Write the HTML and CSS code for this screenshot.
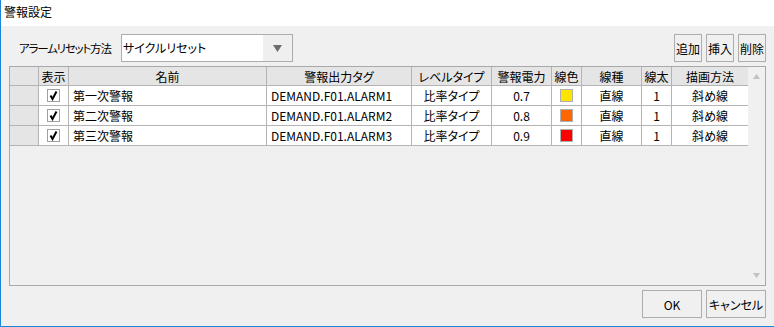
FILE: index.html
```html
<!DOCTYPE html>
<html lang="ja">
<head>
  <meta charset="UTF-8" />
  <title>警報設定</title>
  <link rel="stylesheet" href="styles.css">
</head>
<body>

  <div class="window">
    <div class="titlebar">警報設定</div>

    <div class="content">
      <div class="toolbar">
        <span class="label">アラームリセット方法</span>
        <div class="combo">
          <span class="combo-text">サイクルリセット</span>
          <span class="combo-btn">
            <svg width="9" height="7" viewBox="0 0 9 7"><path d="M0 0 H9 L4.5 7 Z" fill="#6d6d6d"/></svg>
          </span>
        </div>
        <div class="spacer"></div>
        <div class="tool-buttons">
          <button class="btn small">追加</button>
          <button class="btn small">挿入</button>
          <button class="btn small">削除</button>
        </div>
      </div>

      <div class="grid-box">
        <div class="grid">
          <div class="cell head"></div>
          <div class="cell head">表示</div>
          <div class="cell head">名前</div>
          <div class="cell head">警報出力タグ</div>
          <div class="cell head">レベルタイプ</div>
          <div class="cell head">警報電力</div>
          <div class="cell head">線色</div>
          <div class="cell head">線種</div>
          <div class="cell head">線太</div>
          <div class="cell head last">描画方法</div>

          <!-- 行 1 -->
          <div class="cell rowhead"></div>
          <div class="cell"><span class="check"><svg width="11" height="11" viewBox="0 0 11 11"><path d="M2.5 5.5 L4.5 9 L8.5 1.5" fill="none" stroke="#000" stroke-width="2"/></svg></span></div>
          <div class="cell left">第一次警報</div>
          <div class="cell left">DEMAND.F01.ALARM1</div>
          <div class="cell">比率タイプ</div>
          <div class="cell">0.7</div>
          <div class="cell"><span class="swatch yellow"></span></div>
          <div class="cell">直線</div>
          <div class="cell">1</div>
          <div class="cell last">斜め線</div>

          <!-- 行 2 -->
          <div class="cell rowhead"></div>
          <div class="cell"><span class="check"><svg width="11" height="11" viewBox="0 0 11 11"><path d="M2.5 5.5 L4.5 9 L8.5 1.5" fill="none" stroke="#000" stroke-width="2"/></svg></span></div>
          <div class="cell left">第二次警報</div>
          <div class="cell left">DEMAND.F01.ALARM2</div>
          <div class="cell">比率タイプ</div>
          <div class="cell">0.8</div>
          <div class="cell"><span class="swatch orange"></span></div>
          <div class="cell">直線</div>
          <div class="cell">1</div>
          <div class="cell last">斜め線</div>

          <!-- 行 3 -->
          <div class="cell rowhead"></div>
          <div class="cell"><span class="check"><svg width="11" height="11" viewBox="0 0 11 11"><path d="M2.5 5.5 L4.5 9 L8.5 1.5" fill="none" stroke="#000" stroke-width="2"/></svg></span></div>
          <div class="cell left">第三次警報</div>
          <div class="cell left">DEMAND.F01.ALARM3</div>
          <div class="cell">比率タイプ</div>
          <div class="cell">0.9</div>
          <div class="cell"><span class="swatch red"></span></div>
          <div class="cell">直線</div>
          <div class="cell">1</div>
          <div class="cell last">斜め線</div>
        </div>

        <div class="vscroll">
          <svg width="7" height="5" viewBox="0 0 7 5"><path d="M0 5 H7 L3.5 0 Z" fill="#c2c2c2"/></svg>
          <svg width="7" height="5" viewBox="0 0 7 5"><path d="M0 0 H7 L3.5 5 Z" fill="#c2c2c2"/></svg>
        </div>
      </div>

      <div class="footer">
        <button class="btn wide">OK</button>
        <button class="btn wide">キャンセル</button>
      </div>
    </div>
  </div>

</body>
</html>
```

FILE: styles.css
```css
* {
  box-sizing: border-box;
}

body {
  margin: 0;
  font-family: "Noto Sans CJK JP", "Noto Sans", sans-serif;
  font-size: 12px;
  font-feature-settings: "palt";
  color: #000;
  background: #f0f0f0;
}

.window {
  width: 774px;
  height: 327px;
  display: flex;
  flex-direction: column;
  border-left: 1px solid #1a85db;
  border-bottom: 1px solid #1a85db;
  background: #f0f0f0;
}

.titlebar {
  height: 26px;
  flex: none;
  background: #fff;
  padding-left: 3px;
  line-height: 24px;
}

.content {
  flex: 1;
  display: flex;
  flex-direction: column;
  padding: 8px;
  gap: 4px;
}

/* 上部ツールバー */
.toolbar {
  height: 28px;
  display: flex;
  align-items: center;
}

.label {
  flex: none;
  padding-left: 10px;
  width: 112px;
  white-space: nowrap;
  font-size: 11.5px;
  letter-spacing: -1.2px;
}

.combo {
  width: 172px;
  height: 28px;
  display: flex;
  border: 1px solid #acacac;
  background: #fff;
}

.combo-text {
  flex: 1;
  padding-left: 1px;
  line-height: 25px;
}

.combo-btn {
  width: 29px;
  display: flex;
  align-items: center;
  justify-content: center;
  background: #efefef;
}

.spacer {
  flex: 1;
}

.tool-buttons {
  display: flex;
  gap: 4px;
}

.btn {
  font: inherit;
  color: #000;
  background: #f0f0f0;
  border: 1px solid #adadad;
  height: 28px;
  padding: 0;
}

.btn.small {
  width: 28px;
}

/* グリッド */
.grid-box {
  height: 220px;
  display: flex;
  border: 1px solid #a9a9a9;
  background: #f0f0f0;
}

.grid {
  flex: 1;
  display: grid;
  grid-template-columns: 29px 30px 198px 145px 80px 60px 30px 60px 30px 76px;
  grid-auto-rows: 20px;
  grid-template-rows: 19px;
  align-content: start;
}

.cell {
  border-right: 1px solid #b4b4b4;
  border-bottom: 1px solid #b4b4b4;
  background: #fff;
  display: flex;
  align-items: center;
  justify-content: center;
  white-space: nowrap;
  overflow: hidden;
}

.cell.last {
  border-right: none;
}

.cell.left {
  justify-content: flex-start;
  padding-left: 4px;
}

.cell.head,
.cell.rowhead {
  background: #e5e5e5;
}

.check {
  width: 13px;
  height: 13px;
  border: 1px solid #a0a0a0;
  background: #fff;
  display: flex;
  align-items: center;
  justify-content: center;
}

.swatch {
  width: 13px;
  height: 13px;
  border: 1px solid #b0b0b0;
}

.swatch.yellow { background: #ffe400; }
.swatch.orange { background: #ff6600; }
.swatch.red { background: #ff0000; }

.vscroll {
  width: 17px;
  display: flex;
  flex-direction: column;
  justify-content: space-between;
  align-items: center;
  padding: 7px 0;
  background: #f0f0f0;
}

/* 下部ボタン */
.footer {
  height: 28px;
  display: flex;
  justify-content: flex-end;
  gap: 4px;
}

.btn.wide {
  width: 60px;
}
```
